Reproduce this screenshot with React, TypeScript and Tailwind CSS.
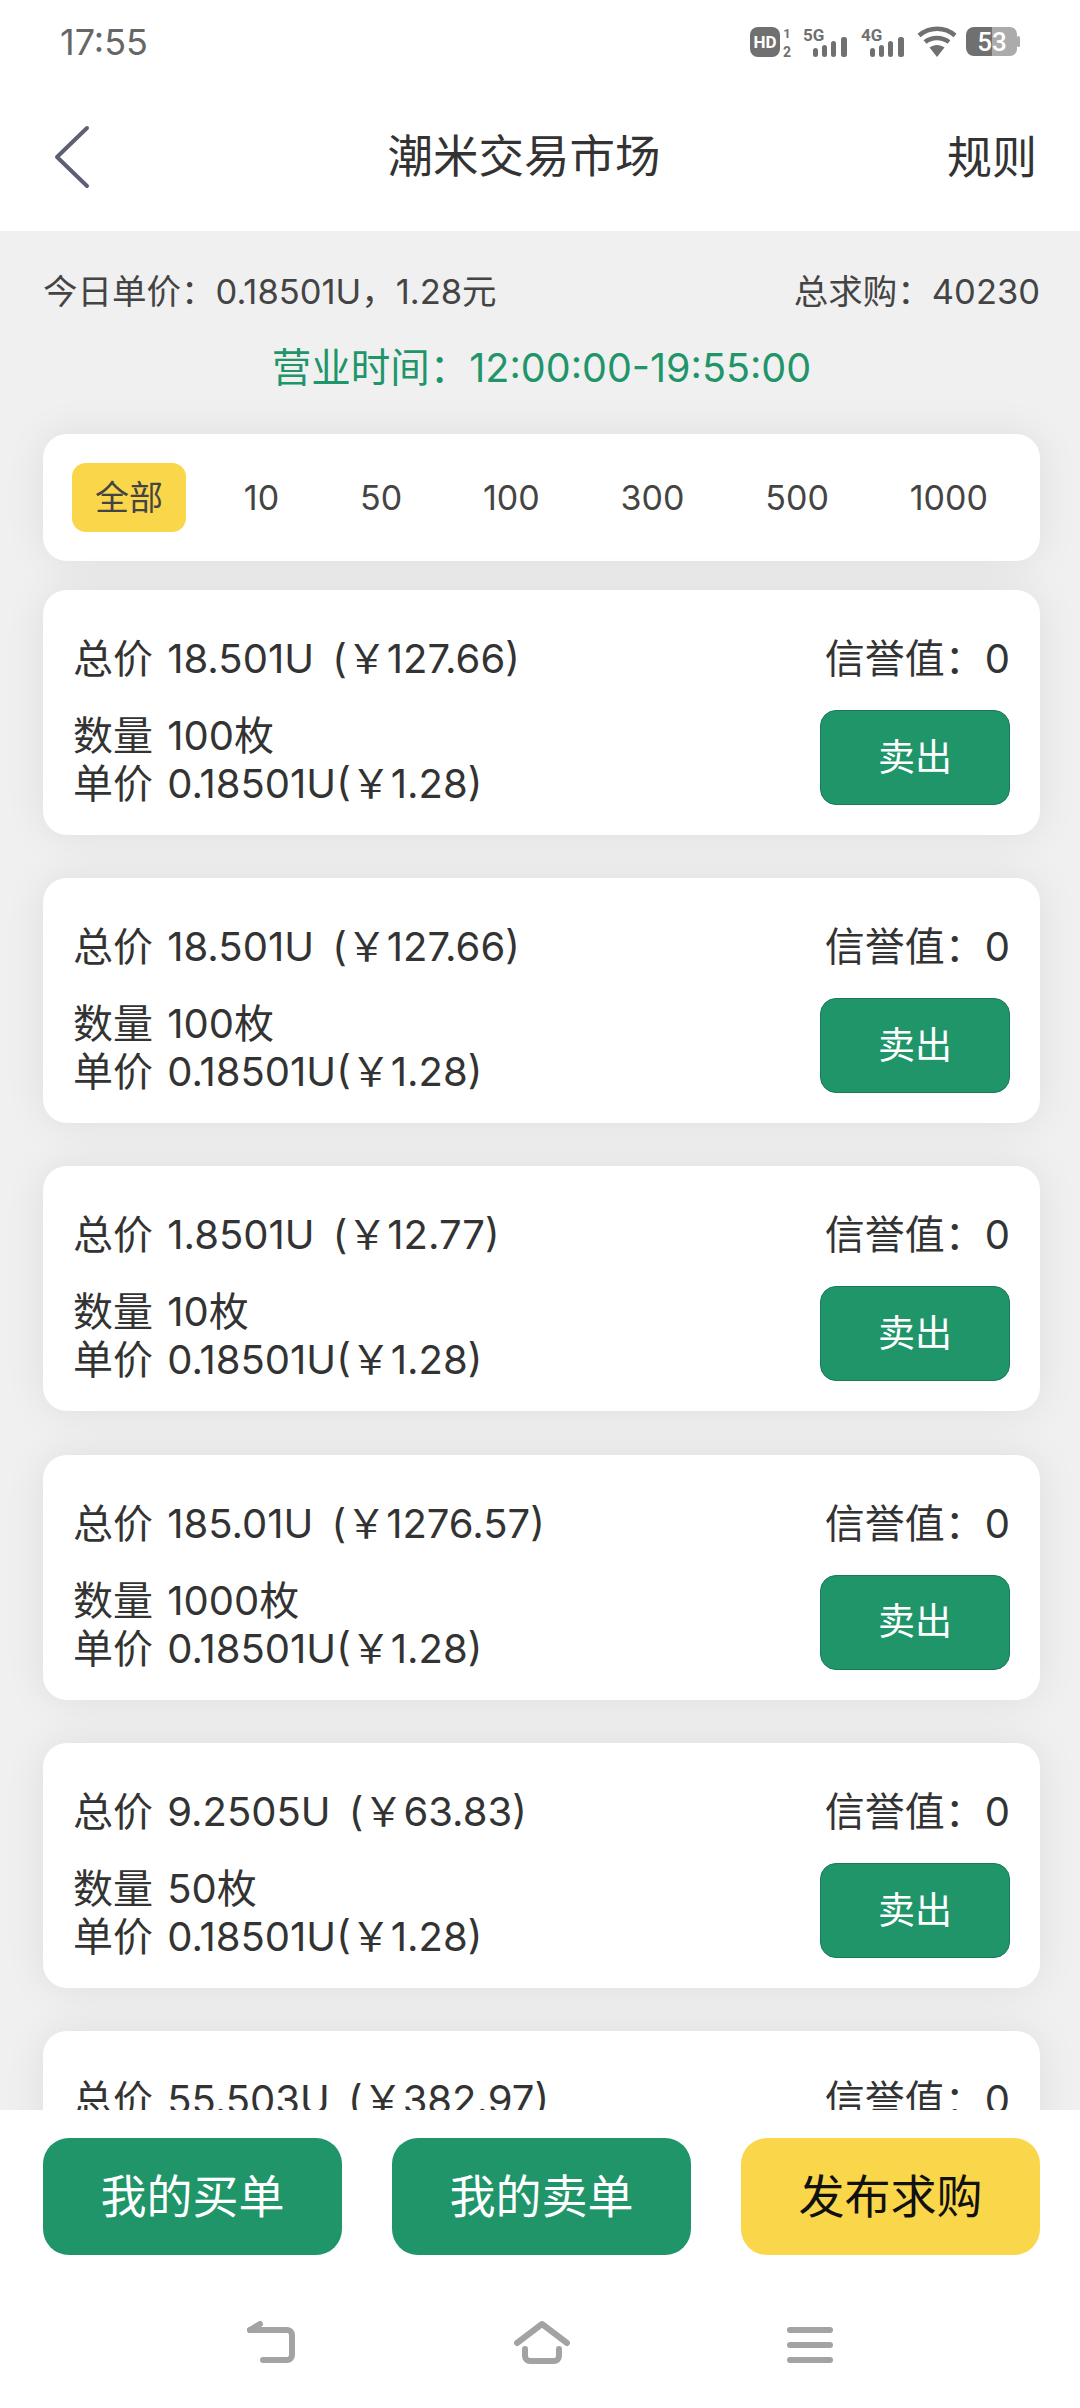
import React from 'react';

const FONT = 'font-["Inter","Noto_Sans_CJK_SC",sans-serif]';

const orders = [
  { total: '18.501U', cny: '127.66', qty: '100' },
  { total: '18.501U', cny: '127.66', qty: '100' },
  { total: '1.8501U', cny: '12.77', qty: '10' },
  { total: '185.01U', cny: '1276.57', qty: '1000' },
  { total: '9.2505U', cny: '63.83', qty: '50' },
  { total: '55.503U', cny: '382.97', qty: '300' },
];

const filters = ['全部', '10', '50', '100', '300', '500', '1000'];

const StatusIcons = () => (
  <svg width="272" height="32" viewBox="0 0 272 32" className="block">
    <g fill="#707070">
      <rect x="0" y="1" width="30" height="30" rx="8" />
      <text x="15" y="22" fontSize="17" fontWeight="700" fill="#fff" textAnchor="middle" fontFamily="Roboto">HD</text>
      <text x="37" y="12" fontSize="13" fontWeight="700" textAnchor="middle" fontFamily="Roboto">1</text>
      <text x="37" y="31" fontSize="14" fontWeight="700" textAnchor="middle" fontFamily="Roboto">2</text>
      <text x="53" y="15" fontSize="17" fontWeight="700" fontFamily="Roboto">5G</text>
      <rect x="63" y="22" width="5" height="9" rx="2.5" />
      <rect x="72" y="19" width="5" height="12" rx="2.5" />
      <rect x="81" y="15" width="5" height="16" rx="2.5" />
      <rect x="91" y="11" width="6" height="20" rx="2.5" />
      <text x="111" y="15" fontSize="17" fontWeight="700" fontFamily="Roboto">4G</text>
      <rect x="120" y="22" width="5" height="9" rx="2.5" />
      <rect x="129" y="19" width="5" height="12" rx="2.5" />
      <rect x="138" y="15" width="5" height="16" rx="2.5" />
      <rect x="148" y="11" width="6" height="20" rx="2.5" />
    </g>
    <g fill="none" stroke="#707070" strokeWidth="4.5">
      <path d="M169 9.5c10.500-9 26-9 36 0" />
      <path d="M175 16c6.500-5.500 17-5.500 24 0" />
    </g>
    <path d="M179.500 21.500c4.500-3.500 10.500-3.500 15 0L187 31z" fill="#707070" />
    <path d="M224 1h28v29h-28a8 8 0 0 1-8-8V9a8 8 0 0 1 8-8z" fill="#707070" />
    <path d="M242 1h18a7 7 0 0 1 7 7v15a7 7 0 0 1-7 7h-18z" fill="#ababab" />
    <rect x="267" y="10" width="3" height="11" rx="1.500" fill="#ababab" />
    <text x="242" y="25" fontSize="26" fontWeight="500" fill="#fff" textAnchor="middle" fontFamily="Roboto">53</text>
  </svg>
);

const OrderCard = ({ total, cny, qty }: { total: string; cny: string; qty: string }) => (
  <div className="rounded-[24px] bg-white px-[30px] pt-[45px] pb-[27px] shadow-[0_0_40px_rgba(0,0,0,0.08)]">
    <div className="flex items-center justify-between text-[40px] leading-[48px] text-[#333]">
      <span>
        总价 <span className="ml-[3px]">{total}</span> <span className="ml-[7px]">(￥{cny})</span>
      </span>
      <span>信誉值：0</span>
    </div>
    <div className="mt-[25px] flex items-start justify-between">
      <div className="pt-[4px] text-[40px] leading-[48px] text-[#333]">
        <div>
          数量 <span className="ml-[3px]">{qty}枚</span>
        </div>
        <div>
          单价 <span className="ml-[3px]">0.18501U(￥1.28)</span>
        </div>
      </div>
      <button className="mt-[2px] h-[95px] w-[190px] rounded-[16px] border border-[#1a7a57] bg-[#1f9569] text-[37px] text-white">
        卖出
      </button>
    </div>
  </div>
);

export default function App() {
  return (
    <div className={`flex h-[2408px] w-[1080px] flex-col overflow-hidden bg-[#f0f0f0] ${FONT}`}>
      <div className="bg-white">
        <div className="flex h-[84px] items-center justify-between pr-[58px] pl-[60px]">
          <span className="text-[36px] text-[#666]">17:55</span>
          <StatusIcons />
        </div>
        <div className="relative flex h-[147px] items-center justify-center pr-[32px]">
          <svg
            width="40"
            height="64"
            viewBox="0 0 40 64"
            className="absolute top-[41px] left-[52px]"
            fill="none"
            stroke="#5d6075"
            strokeWidth="4"
            strokeLinecap="round"
            strokeLinejoin="round"
          >
            <path d="M35 3 5 32l30 29" />
          </svg>
          <span className="text-[45.5px] text-[#333]">潮米交易市场</span>
          <span className="absolute right-[43px] text-[45px] text-[#333]">规则</span>
        </div>
      </div>

      <div className="min-h-0 flex-1 overflow-hidden pr-[40px] pl-[43px]">
        <div className="flex items-center justify-between pt-[41px] text-[34.5px] leading-[40px] text-[#444]">
          <span>今日单价：0.18501U，1.28元</span>
          <span>总求购：40230</span>
        </div>
        <div className="mt-[33px] text-center text-[39.5px] leading-[46px] text-[#1f9569]">
          营业时间：12:00:00-19:55:00
        </div>

        <div className="mt-[43px] flex h-[127px] items-center justify-between rounded-[24px] bg-white px-[29px] shadow-[0_0_40px_rgba(0,0,0,0.08)]">
          {filters.map((f, i) => (
            <span
              key={f}
              className={
                i === 0
                  ? 'flex h-[69px] items-center rounded-[14px] bg-[#fad64b] px-[23px] text-[34px] text-[#444]'
                  : 'flex h-[69px] items-center px-[23px] text-[34px] text-[#444]'
              }
            >
              {f}
            </span>
          ))}
        </div>

        <div className="mt-[29px] flex flex-col gap-[43.2px]">
          {orders.map((o, i) => (
            <OrderCard key={i} {...o} />
          ))}
        </div>
      </div>

      <div className="relative h-[298px] bg-white">
        <div className="flex justify-between pt-[28px] pr-[40px] pl-[43px]">
          <button className="h-[117px] w-[299px] rounded-[26px] bg-[#1f9569] text-[46px] text-white">我的买单</button>
          <button className="h-[117px] w-[299px] rounded-[26px] bg-[#1f9569] text-[46px] text-white">我的卖单</button>
          <button className="h-[117px] w-[299px] rounded-[26px] bg-[#fad64b] text-[46px] text-[#111]">发布求购</button>
        </div>
        <div className="mt-[65px] flex items-start justify-between pr-[247px] pl-[246px]">
          <svg width="50" height="46" viewBox="0 0 50 46" fill="none" stroke="#a3a3a3" strokeWidth="6" strokeLinecap="round" strokeLinejoin="round">
            <path d="M4 10 14 4" />
            <path d="M4 10h37a5 5 0 0 1 5 5v20a5 5 0 0 1-5 5H17" />
          </svg>
          <svg width="60" height="46" viewBox="0 0 60 46" fill="none" stroke="#a3a3a3" strokeWidth="6" strokeLinecap="round" strokeLinejoin="round">
            <path d="M5 23 30 4l25 19" />
            <path d="M13 29v7a5 5 0 0 0 5 5h24a5 5 0 0 0 5-5v-7" />
          </svg>
          <svg width="46" height="37" viewBox="0 0 46 37" fill="#a3a3a3" className="mt-[7px]">
            <rect x="0" y="0" width="46" height="6" rx="3" />
            <rect x="0" y="15" width="46" height="6" rx="3" />
            <rect x="0" y="30" width="46" height="6" rx="3" />
          </svg>
        </div>
      </div>
    </div>
  );
}
